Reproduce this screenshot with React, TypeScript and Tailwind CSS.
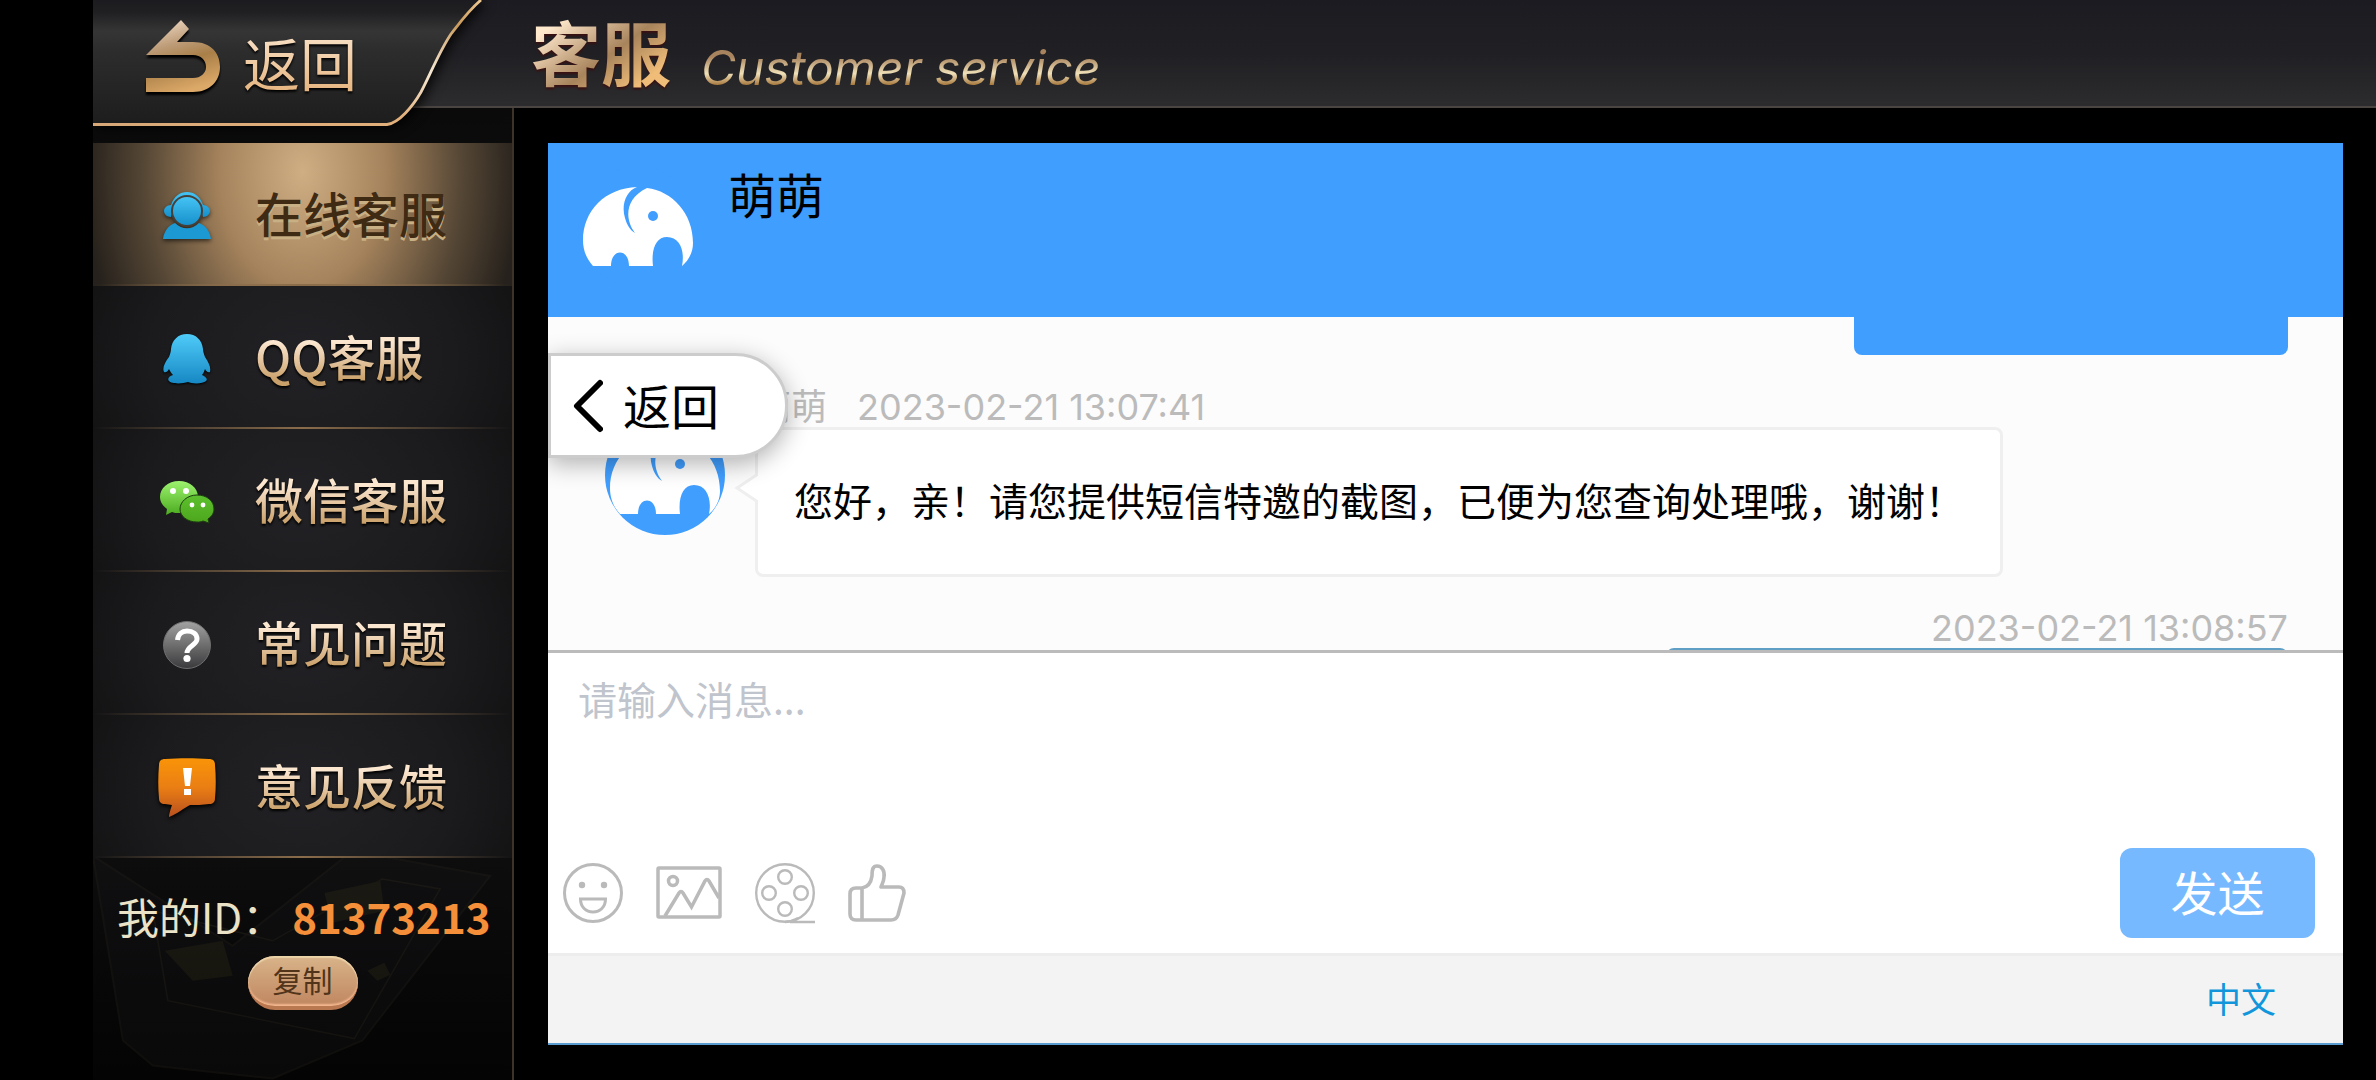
import { useState } from 'react';
import type { ReactNode } from 'react';
import clsx from 'clsx';

interface NavItem {
  id: string;
  label: string;
  icon: ReactNode;
}

function BackArrowIcon() {
  return (
    <svg viewBox="0 0 76 76" className="mb-3 h-[76px] w-[76px] shrink-0 drop-shadow-[0_3px_1px_#000]">
      <defs>
        <linearGradient id="arrow-gold" x1="0.2" y1="0" x2="0.5" y2="1">
          <stop offset="0" stopColor="#efd9c2" />
          <stop offset="0.35" stopColor="#bd9c78" />
          <stop offset="0.6" stopColor="#a97f48" />
          <stop offset="1" stopColor="#dca968" />
        </linearGradient>
      </defs>
      <path
        d="M36 1 L44 10 L32 23 H48 C66 23 75 34 75 48 C75 62 65 73 48 73 H1 V59 H48 C56 59 61 54 61 48 C61 41 56 36 48 36 H1 Z"
        fill="url(#arrow-gold)"
      />
    </svg>
  );
}

function AgentIcon() {
  return (
    <svg viewBox="0 0 50 50" className="h-[50px] w-[50px] drop-shadow-[0_2px_2px_rgba(0,0,0,0.6)]">
      <defs>
        <linearGradient id="agent-blue" x1="0" y1="0" x2="0" y2="1">
          <stop offset="0" stopColor="#45c3f4" />
          <stop offset="1" stopColor="#1790cb" />
        </linearGradient>
      </defs>
      <path d="M9 14 C12 5 18 1 25 1 S38 5 41 14 C45 14 48 17 48 20 S45 26 41 26 L38 16 C36 8 30 5 25 5 S14 8 12 16 L9 26 C5 26 2 23 2 20 S5 14 9 14Z" fill="url(#agent-blue)" />
      <path d="M1 48 C2 40 7 34 13 32 C20 39 30 39 37 32 C43 34 48 40 49 48Z" fill="#1c98d3" />
      <circle cx="25" cy="20" r="16" fill="#463f38" />
      <circle cx="25" cy="20" r="14" fill="url(#agent-blue)" />
    </svg>
  );
}

function PenguinIcon() {
  return (
    <svg viewBox="0 0 50 50" className="h-[50px] w-[50px] drop-shadow-[0_1px_1px_#000]">
      <defs>
        <linearGradient id="penguin-blue" x1="0" y1="0" x2="0" y2="1">
          <stop offset="0" stopColor="#4fcbf8" />
          <stop offset="1" stopColor="#1688c4" />
        </linearGradient>
      </defs>
      <path
        d="M25 0 C34 0 40 6 41 15 C41 18 42 20 43 23 C47 29 49 33 48 38 C46 39 44 37 43 35 C42 38 41 40 40 41 C44 43 46 45 44 47 C41 50 30 50 26 48 C20 50 9 50 7 47 C5 45 7 42 11 41 C9 39 8 37 7 35 C6 37 4 39 2 38 C0 34 3 28 7 23 C8 20 9 18 9 15 C10 6 16 0 25 0Z"
        fill="url(#penguin-blue)"
      />
    </svg>
  );
}

function WechatIcon() {
  return (
    <svg viewBox="0 0 56 44" className="h-[44px] w-[56px]">
      <defs>
        <linearGradient id="wechat-light" x1="0" y1="0" x2="0" y2="1">
          <stop offset="0" stopColor="#9df26e" />
          <stop offset="1" stopColor="#4bab1f" />
        </linearGradient>
        <linearGradient id="wechat-dark" x1="0" y1="0" x2="0" y2="1">
          <stop offset="0" stopColor="#5cc02d" />
          <stop offset="1" stopColor="#4da61c" />
        </linearGradient>
      </defs>
      <path d="M20 1 C31 1 39 8 39 17 S31 33 20 33 C17 33 15 33 13 32 L7 35 L8 29 C4 26 1 22 1 17 C1 8 9 1 20 1Z" fill="url(#wechat-light)" />
      <path d="M38 15 C48 15 55 21 55 29 C55 33 53 36 49 39 L50 43 L44 41 C42 42 40 42 38 42 C28 42 21 36 21 29 S28 15 38 15Z" fill="url(#wechat-dark)" stroke="#1d3d10" strokeWidth="1" />
      <circle cx="14" cy="11" r="3" fill="#fff" />
      <circle cx="27" cy="11" r="3" fill="#fff" />
      <circle cx="33" cy="25" r="2.4" fill="#fff" />
      <circle cx="44" cy="25" r="2.4" fill="#fff" />
    </svg>
  );
}

function QuestionIcon() {
  return (
    <svg viewBox="0 0 50 50" className="h-[50px] w-[50px]">
      <defs>
        <linearGradient id="question-gray" x1="0" y1="0" x2="0" y2="1">
          <stop offset="0" stopColor="#a2a2a2" />
          <stop offset="1" stopColor="#3a3a3c" />
        </linearGradient>
      </defs>
      <circle cx="25" cy="25" r="23.5" fill="url(#question-gray)" stroke="#6d6d6d" strokeWidth="1" />
      <path d="M15.500 20 C16 14 20 11 25 11 C31 11 35 14 35 19 C35 25 25 26 25 33" fill="none" stroke="#fff" strokeWidth="5" />
      <circle cx="25" cy="38.500" r="3.600" fill="#fff" />
    </svg>
  );
}

function FeedbackIcon() {
  return (
    <svg viewBox="0 0 60 60" className="h-[60px] w-[60px] drop-shadow-[0_2px_2px_#000]">
      <defs>
        <linearGradient id="feedback-orange" x1="0" y1="0" x2="0" y2="1">
          <stop offset="0" stopColor="#f99408" />
          <stop offset="0.5" stopColor="#ea7e14" />
          <stop offset="1" stopColor="#b8501e" />
        </linearGradient>
      </defs>
      <path d="M8 1 C22 0 38 0 52 1 C56 1 58 3 58 7 C59 19 59 30 58 40 C58 44 56 46 52 46 C46 47 38 47 33 47 C27 50 20 56 12 59 C12 56 14 50 15 47 L8 46 C4 46 2 44 2 40 C1 30 1 19 2 7 C2 3 4 1 8 1Z" fill="url(#feedback-orange)" />
      <path d="M26 10 H35 L33 28 H28Z M27 31 H34 V37 H27Z" fill="#fff" />
    </svg>
  );
}

// Elephant drawn in a round badge: `body` is the animal, `ground` what shows through it
function ElephantBadge({ body, ground, className }: { body: string; ground: string; className?: string }) {
  return (
    <svg viewBox="0 0 120 120" className={className}>
      <circle cx="60" cy="60" r="60" fill={ground} />
      <path
        d="M15 99 C8 91 5 83 5 73 C5 44 27 21 59 20 C48 24 43 38 47 51 C49 58 52 63 57 66 C47 53 46 32 69 21 C94 24 115 46 115 76 C115 85 111 93 104 99 C107 84 102 70 89 70 C78 70 73 82 75 99 H51 C51 81 33 81 33 99Z"
        fill={body}
      />
      <circle cx="75" cy="49" r="5" fill={ground} />
    </svg>
  );
}

const navItems: NavItem[] = [
  { id: 'online', label: '在线客服', icon: <AgentIcon /> },
  { id: 'qq', label: 'QQ客服', icon: <PenguinIcon /> },
  { id: 'wechat', label: '微信客服', icon: <WechatIcon /> },
  { id: 'faq', label: '常见问题', icon: <QuestionIcon /> },
  { id: 'feedback', label: '意见反馈', icon: <FeedbackIcon /> },
];

const tools = [
  {
    name: '表情',
    width: 'w-[62px]',
    drawing: (
      <svg viewBox="0 0 62 62" className="h-[62px] w-[62px]" fill="none" stroke="#bababa" strokeWidth="3">
        <circle cx="31" cy="31" r="28.500" />
        <circle cx="20" cy="23" r="3.200" fill="#bababa" stroke="none" />
        <circle cx="42" cy="23" r="3.200" fill="#bababa" stroke="none" />
        <path d="M18.500 37 H43.500 C43.500 45 38 50 31 50 S18.500 45 18.500 37Z" />
      </svg>
    ),
  },
  {
    name: '图片',
    width: 'w-[66px]',
    drawing: (
      <svg viewBox="0 0 66 62" className="h-[62px] w-[66px]" fill="none" stroke="#bababa" strokeWidth="3.500">
        <rect x="2" y="6" width="62" height="49" rx="1" />
        <circle cx="17" cy="19" r="4.500" />
        <path d="M9 54 L23 31 Q25 28 27 31 L35.500 45 L49 19 Q51 16 53 19 L63 36" />
      </svg>
    ),
  },
  {
    name: '视频',
    width: 'w-[62px]',
    drawing: (
      <svg viewBox="0 0 62 62" className="h-[62px] w-[62px]" fill="none" stroke="#bababa" strokeWidth="2.400">
        <circle cx="31" cy="31" r="28.800" />
        <circle cx="31" cy="15" r="6.800" />
        <circle cx="15" cy="31" r="6.800" />
        <circle cx="47" cy="31" r="6.800" />
        <circle cx="31" cy="47" r="6.800" />
        <path d="M31 60 C37 60 40 58 44 56 M36 60 H61" />
      </svg>
    ),
  },
  {
    name: '评价',
    width: 'w-[58px]',
    drawing: (
      <svg viewBox="0 0 58 62" className="h-[62px] w-[58px]" fill="none" stroke="#bababa" strokeWidth="3.600" strokeLinejoin="round">
        <path d="M14 26 C20 25 23 21 24 14 C24 7 25 4 29 4 C34 4 37 9 36 15 C36 19 34 22 33 25 H51 C55 25 56 28 56 31 L50 53 C49 56 47 58 43 58 H8 C4 58 2 56 2 52 V32 C2 28 4 26 8 26Z M14 26 V58" />
      </svg>
    ),
  },
];

function Header() {
  return (
    <header className="flex h-[108px] shrink-0 items-start border-b-2 border-[#4b4542] bg-gradient-to-b from-[#1b1b21] via-[#202024] to-[#2c2c2e]">
      <button className="relative z-10 flex h-[126px] w-[390px] shrink-0 items-center pl-[52px] text-left">
        <svg viewBox="0 0 390 126" className="absolute inset-0 h-[126px] w-[390px] drop-shadow-[4px_2px_6px_rgba(0,0,0,0.8)]">
          <defs>
            <linearGradient id="tab-fill" x1="0" y1="0" x2="0" y2="1">
              <stop offset="0" stopColor="#1c1c20" />
              <stop offset="0.1" stopColor="#202023" />
              <stop offset="0.25" stopColor="#353535" />
              <stop offset="0.4" stopColor="#2d2d2e" />
              <stop offset="1" stopColor="#1d1d1e" />
            </linearGradient>
            <linearGradient id="tab-edge" x1="0" y1="0" x2="1" y2="0">
              <stop offset="0" stopColor="#d8a878" />
              <stop offset="0.8" stopColor="#e2b07a" />
              <stop offset="0.87" stopColor="#f5e6d2" />
              <stop offset="0.94" stopColor="#c99a5c" />
              <stop offset="1" stopColor="#f0c992" />
            </linearGradient>
          </defs>
          <path d="M0 124.500 H294 C306 123 320 106 328 92 C338 73 346 52 358 34 C368 21 376 10 388 0 H0Z" fill="url(#tab-fill)" />
          <path d="M0 124.500 H294 C306 123 320 106 328 92 C338 73 346 52 358 34 C368 21 376 10 388 0" fill="none" stroke="url(#tab-edge)" strokeWidth="2.800" />
        </svg>
        <span className="relative flex items-center gap-[22px]">
          <BackArrowIcon />
          <span className="bg-gradient-to-b from-[#fbe6cf] to-[#e3b077] bg-clip-text pb-1 text-[57px] leading-[68px] text-transparent drop-shadow-[0_2px_1px_#000]">
            返回
          </span>
        </span>
      </button>
      <div className="flex items-start gap-[30px] pl-12">
        <h1 className="bg-gradient-to-br from-[#ffe9cd] from-20% via-[#a8845c] via-55% to-[#f0bd78] to-80% bg-clip-text text-[70px] leading-[102px] font-bold text-transparent drop-shadow-[0_2px_1px_#3a1010]">
          客服
        </h1>
        <p className="mt-10 bg-gradient-to-b from-[#a8845e] from-30% via-[#efe0b8] via-60% to-[#a87a3e] to-80% bg-clip-text pr-2 font-['Inter'] text-[48px] leading-[56px] text-transparent italic">
          Customer service
        </p>
      </div>
    </header>
  );
}

function Sidebar({ active, onSelect }: { active: string; onSelect: (id: string) => void }) {
  return (
    <aside className="relative w-[421px] shrink-0 overflow-hidden border-r-2 border-[#3d3329] bg-gradient-to-b from-[#0a0a0a] via-[#1b1b1d] to-[#040404] pt-[35px]">
      {/* Faint playing cards in the lower part */}
      <svg viewBox="0 0 420 230" className="absolute bottom-0 left-0 w-full opacity-30" fill="none">
        <path d="M0 5 L30 190 L60 215 L180 228 L270 190 L398 25 L260 0 L140 95Z" fill="#17171a" stroke="#2a271f" strokeWidth="2" />
        <path d="M60 60 L75 150 L262 188 L348 38 L290 28 L180 90 Z" stroke="#3a3326" strokeWidth="1.500" />
        <path d="M232 42 L288 30 L292 60 L240 72Z M72 100 L130 90 L140 125 L100 130Z M275 120 L292 112 L298 124 L285 130Z" fill="#3b3720" />
      </svg>

      <nav className="relative">
        {navItems.map((item) => {
          const isActive = item.id === active;
          return (
            <button
              key={item.id}
              onClick={() => onSelect(item.id)}
              aria-current={isActive ? 'page' : undefined}
              className={clsx(
                'flex h-[143px] w-full flex-col',
                isActive
                  ? 'bg-[radial-gradient(ellipse_52%_210%_at_50%_20%,#cfae84_0%,#a5835c_38%,#574836_72%,#26211c_100%)]'
                  : 'bg-[radial-gradient(ellipse_60%_140%_at_50%_50%,#222226_0%,#1b1b1d_60%,#111112_100%)]',
              )}
            >
              <span className="flex flex-1 items-center gap-9 pl-[62px]">
                <span className="flex w-16 shrink-0 justify-center pt-1">{item.icon}</span>
                <span
                  className={clsx(
                    'mb-1 text-[48px] leading-[64px] font-medium',
                    isActive
                      ? 'text-[#3f2a14] [text-shadow:0_3px_0_#c8b084]'
                      : 'bg-gradient-to-b from-[#fbe6cf] from-30% to-[#c9a069] to-90% bg-clip-text text-transparent drop-shadow-[0_2px_1px_#000]',
                  )}
                >
                  {item.label}
                </span>
              </span>
              <span className="h-[2px] w-full bg-gradient-to-r from-transparent via-[#8a6c4a] to-transparent" />
            </button>
          );
        })}
      </nav>

      <div className="relative flex flex-col items-center">
        <p className="flex w-full items-center gap-2 pt-[26px] pl-6 text-[42px] leading-[64px] whitespace-nowrap text-[#ebe3c8]">
          我的ID：
          <span className="font-bold text-[#f58f39]">81373213</span>
        </p>
        <button className="mt-2 h-[54px] w-[110px] rounded-full border-b-4 border-[#b97850] bg-gradient-to-b from-[#d8b48a] to-[#c08660] pb-1 text-[30px] leading-[42px] text-[#51341a] shadow-[inset_0_2px_1px_#ecd3a8,inset_0_-2px_2px_#f3b890]">
          复制
        </button>
      </div>
    </aside>
  );
}

function Messages() {
  return (
    <section className="flex flex-1 flex-col overflow-hidden bg-[#fcfcfc] pr-[55px] font-['Inter','Noto_Sans_CJK_SC',sans-serif]">
      <div className="h-[38px] w-[434px] shrink-0 self-end rounded-b-lg bg-[#409eff]" />

      <div className="mt-8 flex shrink-0 pl-[57px]">
        <ElephantBadge body="#fff" ground="#409eff" className="mt-7 h-[120px] w-[120px] shrink-0" />
        <div className="ml-[30px]">
          <div className="flex gap-[30px] text-[36px] leading-10 text-[#bbb]">
            <span>萌萌</span>
            <time>2023-02-21 13:07:41</time>
          </div>
          <div className="relative rounded-lg border-[3px] border-[#efefef] bg-white px-9 py-[42px]">
            <svg viewBox="0 0 24 34" className="absolute top-[41px] left-[-24px] h-[34px] w-6">
              <path d="M24 3 L3 17 L24 31" fill="#fff" stroke="#efefef" strokeWidth="3" />
            </svg>
            <p className="text-[39px] leading-[60px] whitespace-nowrap text-black">
              您好，亲！请您提供短信特邀的截图，已便为您查询处理哦，谢谢！
            </p>
          </div>
        </div>
      </div>

      <time className="mt-[31px] shrink-0 self-end text-[36px] leading-10 text-[#bbb]">2023-02-21 13:08:57</time>
      <div className="h-24 w-[622px] shrink-0 self-end rounded-lg border-t-2 border-[#5f9fc6] bg-[#409eff]" />
    </section>
  );
}

function Composer() {
  const [draft, setDraft] = useState('');

  return (
    <section className="flex h-[303px] shrink-0 flex-col border-t-[3px] border-[#bbb] bg-white">
      <textarea
        aria-label="消息"
        value={draft}
        onChange={(e) => setDraft(e.target.value)}
        placeholder="请输入消息..."
        className="block w-full flex-1 resize-none px-[30px] pt-4 text-[39px] leading-[58px] text-black outline-none placeholder:text-[#c0c4cc]"
      />
      <div className="flex shrink-0 items-center justify-between pr-7 pb-[15px] pl-[14px]">
        <div className="flex items-center gap-8">
          {tools.map((tool) => (
            <button key={tool.name} aria-label={tool.name} className={clsx('shrink-0', tool.width)}>
              {tool.drawing}
            </button>
          ))}
        </div>
        <button className="h-[90px] w-[195px] rounded-xl bg-[#76b9ff] pb-1 text-[47px] leading-[60px] text-white">
          发送
        </button>
      </div>
    </section>
  );
}

export default function App() {
  const [active, setActive] = useState('online');

  return (
    <div className="flex h-screen flex-col overflow-hidden bg-black pl-[93px] font-['Noto_Sans_CJK_SC',sans-serif]">
      <Header />
      <div className="flex min-h-0 flex-1">
        <Sidebar active={active} onSelect={setActive} />

        <main className="relative mt-[35px] mr-[33px] mb-[35px] ml-[34px] flex min-w-0 flex-1 flex-col border-b-2 border-[#5a9bd0]">
          <div className="flex h-[174px] shrink-0 items-start gap-[30px] bg-[#409eff] pt-6 pl-[30px]">
            <ElephantBadge body="#fff" ground="#409eff" className="h-[120px] w-[120px] shrink-0" />
            <h2 className="text-[48px] leading-[52px] text-black">萌萌</h2>
          </div>
          <Messages />
          <Composer />
          <footer className="flex h-[90px] shrink-0 items-center justify-end border-t-[3px] border-[#ededed] bg-[#f3f3f3] pr-[67px]">
            <button className="pb-1 text-[35px] leading-[50px] text-[#1296db]">中文</button>
          </footer>

          {/* Floating back button */}
          <button className="absolute top-[210px] left-0 flex h-[105px] w-[240px] items-center gap-5 rounded-r-full border-[3px] border-[#ccc] bg-white pl-[22px] text-[48px] leading-[60px] text-black shadow-[0_6px_24px_rgba(0,0,0,0.3)] [clip-path:inset(-40px_-40px_-40px_0)]">
            <svg viewBox="0 0 30 54" className="h-[54px] w-[30px] shrink-0">
              <path d="M27 4 L4 27 L27 50" fill="none" stroke="#000" strokeWidth="6" strokeLinecap="round" strokeLinejoin="round" />
            </svg>
            <span className="pb-1">返回</span>
          </button>
        </main>
      </div>
    </div>
  );
}
